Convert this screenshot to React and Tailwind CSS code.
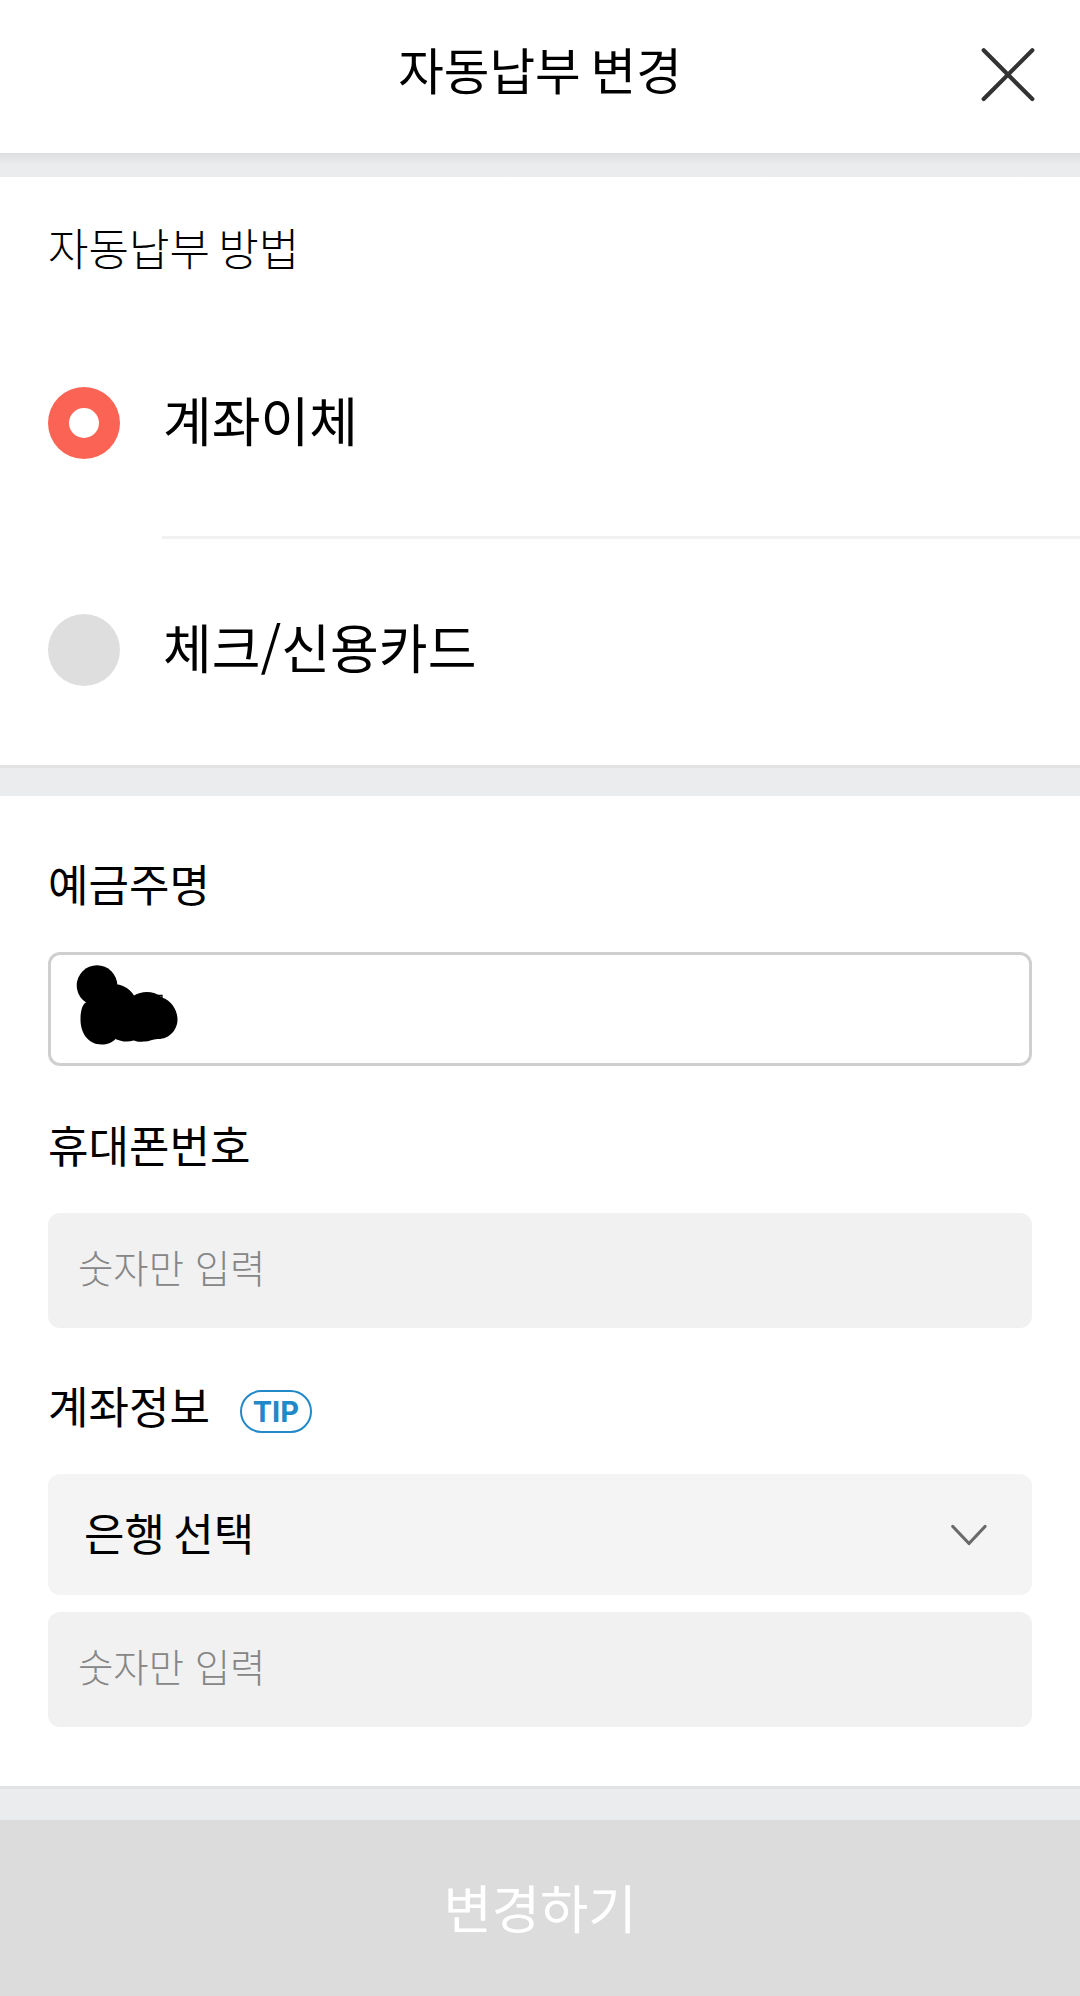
import React from "react";

const fontFamily = "font-['Noto_Sans_CJK_KR',sans-serif]";

function Band({ className }) {
  return <div className={`shrink-0 border-t-[3px] border-[#e2e3e5] bg-[#ebecee] ${className}`} />;
}

function Label({ children, className = "" }) {
  return (
    <div className={`h-16 pt-px text-[44px] leading-16 [word-spacing:-4px] whitespace-nowrap ${className}`}>
      {children}
    </div>
  );
}

function Option({ label, selected, className }) {
  return (
    <label className={`flex items-center pl-12 ${className}`}>
      <span
        className={`flex size-[72px] shrink-0 items-center justify-center rounded-full ${
          selected ? "bg-[#fb6354]" : "bg-[#dedede]"
        }`}
      >
        {selected && <span className="size-[30px] rounded-full bg-white" />}
      </span>
      <span className="ml-[43px] pb-[7px] text-[53px] leading-[72px] whitespace-nowrap">{label}</span>
    </label>
  );
}

function NumberInput({ className = "" }) {
  return (
    <div
      className={`flex h-[115px] items-center rounded-xl bg-[#f1f1f1] pb-2.5 pl-[30px] text-[38.4px] leading-14 font-light text-[#868686] ${className}`}
    >
      숫자만 입력
    </div>
  );
}

export default function App() {
  return (
    <div
      lang="ko"
      className={`flex h-[1996px] w-[1080px] flex-col overflow-hidden bg-white text-black ${fontFamily}`}
    >
      <header className="grid h-[153px] shrink-0 grid-cols-[1fr_auto_1fr] items-start">
        <span />
        <h1 className="mt-[32px] text-[49.6px] leading-[72px] font-normal [word-spacing:-4px] whitespace-nowrap">
          자동납부 변경
        </h1>
        <button aria-label="닫기" className="mt-[44px] mr-[42px] justify-self-end">
          <svg width="60" height="60" viewBox="0 0 60 60" fill="none" stroke="#333" strokeWidth="4.2" strokeLinecap="round">
            <path d="M5.7 6.3 54.3 55M54.3 6.3 5.7 55" />
          </svg>
        </button>
      </header>
      <div className="h-6 shrink-0 bg-linear-to-b from-[#dddee0] to-[#ebecee] to-50%" />

      <section className="h-[588px] shrink-0 pt-[37px]">
        <Label className="pl-12 font-light">자동납부 방법</Label>
        <Option label="계좌이체" selected className="mt-[31px] h-[227px]" />
        <div className="ml-[162px] h-[3px] bg-[#f1f1f1]" />
        <Option label="체크/신용카드" className="h-[221px]" />
      </section>
      <Band className="h-[31px]" />

      <section className="h-[990px] shrink-0 px-12 pt-[54px]">
        <Label>예금주명</Label>
        <div className="mt-[38px] flex h-[114px] rounded-xl border-3 border-[#cfcfcf] pt-[8px] pl-[25px]">
          <svg width="102" height="84" viewBox="76 963 102 84">
            <circle cx="97" cy="985.500" r="20.300" />
            <path d="M113 984c9 0 16 4 21 11.500 8-5 20-5 28 2 9 3 15.500 12 15.500 22 0 11-9 20-20 19.500-5 0-9 3-14 2.500-5 1-8-.5-10-1-6 2-13 1-18-1.500-4 4-8 5.500-14 5.500-13 0-21-11-21-25 0-6 1-13 4-16Z" />
            <path d="M157 995.500h5v7" fill="none" stroke="#000" strokeWidth="1.300" />
          </svg>
        </div>

        <Label className="mt-[45px]">휴대폰번호</Label>
        <NumberInput className="mt-[38px]" />

        <div className="mt-11 flex h-16">
          <Label>계좌정보</Label>
          <span className="mt-[18px] ml-[30px] flex h-[43px] w-[72px] items-center justify-center rounded-full border-2 border-[#2189c8] font-['Inter',sans-serif] text-[29px] leading-none font-bold text-[#2189c8]">
            TIP
          </span>
        </div>
        <div className="mt-[38px] flex h-[121px] items-center justify-between rounded-xl bg-[#f4f4f4] pr-[45px] pl-9">
          <span className="pb-[5px] text-[44px] leading-16 [word-spacing:-4px]">은행 선택</span>
          <svg width="36" height="24" viewBox="0 0 36 24" fill="none" stroke="#6a6a6a" strokeWidth="3.2" strokeLinecap="round" strokeLinejoin="round">
            <path d="M1.800 3.500 18 20.500 34 3.500" />
          </svg>
        </div>
        <NumberInput className="mt-[17px]" />
      </section>
      <Band className="h-[34px]" />

      <button className="h-44 shrink-0 bg-[#dcdcdc] pb-[5px] text-center text-[52.5px] leading-[72px] text-white">
        변경하기
      </button>
    </div>
  );
}
